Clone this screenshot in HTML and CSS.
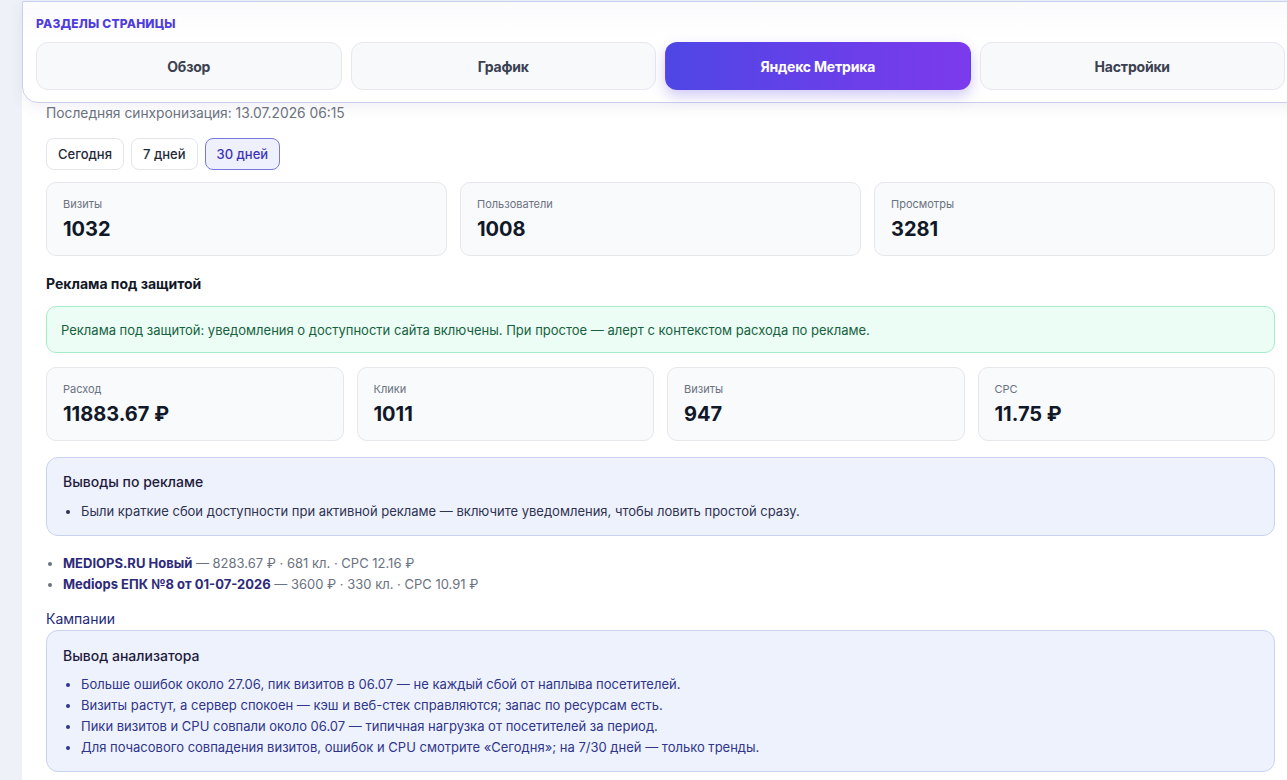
FILE: index.html
```html
<!DOCTYPE html>
<html lang="ru">
<head>
<meta charset="utf-8">
<title>Яндекс Метрика</title>
<link rel="stylesheet" href="styles.css">
</head>
<body>
<div class="main">
  <nav class="sections">
    <div class="sections-title">Разделы страницы</div>
    <div class="tabs">
      <button class="tab">Обзор</button>
      <button class="tab">График</button>
      <button class="tab active">Яндекс Метрика</button>
      <button class="tab">Настройки</button>
    </div>
  </nav>
  <div class="content">
    <div class="sync">Последняя синхронизация: 13.07.2026 06:15</div>
    <div class="ranges">
      <button class="range">Сегодня</button>
      <button class="range">7 дней</button>
      <button class="range active">30 дней</button>
    </div>
    <div class="cards cards-3">
      <div class="card"><div class="card-label">Визиты</div><div class="card-value">1032</div></div>
      <div class="card"><div class="card-label">Пользователи</div><div class="card-value">1008</div></div>
      <div class="card"><div class="card-label">Просмотры</div><div class="card-value">3281</div></div>
    </div>
    <h3 class="section-h">Реклама под защитой</h3>
    <div class="alert">Реклама под защитой: уведомления о доступности сайта включены. При простое — алерт с контекстом расхода по рекламе.</div>
    <div class="cards cards-4">
      <div class="card"><div class="card-label">Расход</div><div class="card-value">11883.67 ₽</div></div>
      <div class="card"><div class="card-label">Клики</div><div class="card-value">1011</div></div>
      <div class="card"><div class="card-label">Визиты</div><div class="card-value">947</div></div>
      <div class="card"><div class="card-label">CPC</div><div class="card-value">11.75 ₽</div></div>
    </div>
    <div class="note note-ads">
      <div class="note-title">Выводы по рекламе</div>
      <ul class="note-list">
        <li>Были краткие сбои доступности при активной рекламе — включите уведомления, чтобы ловить простой сразу.</li>
      </ul>
    </div>
    <ul class="campaigns">
      <li><b>MEDIOPS.RU Новый</b> — 8283.67 ₽ · 681 кл. · CPC 12.16 ₽</li>
      <li><b>Mediops ЕПК №8 от 01-07-2026</b> — 3600 ₽ · 330 кл. · CPC 10.91 ₽</li>
    </ul>
    <div class="camp-h">Кампании</div>
    <div class="note note-analyzer">
      <div class="note-title">Вывод анализатора</div>
      <ul class="note-list">
        <li>Больше ошибок около 27.06, пик визитов в 06.07 — не каждый сбой от наплыва посетителей.</li>
        <li>Визиты растут, а сервер спокоен — кэш и веб-стек справляются; запас по ресурсам есть.</li>
        <li>Пики визитов и CPU совпали около 06.07 — типичная нагрузка от посетителей за период.</li>
        <li>Для почасового совпадения визитов, ошибок и CPU смотрите «Сегодня»; на 7/30 дней — только тренды.</li>
      </ul>
    </div>
  </div>
</div>
</body>
</html>
```

FILE: styles.css
```css
* { box-sizing: border-box; }
html, body { margin: 0; padding: 0; }
body {
  background: #eef1f7;
  font-family: Inter, "Noto Sans", "Liberation Sans", sans-serif;
  color: #111827;
  overflow: hidden;
  height: 780px;
}
.main {
  margin-left: 22px;
  width: 1277px;
  min-height: 780px;
  background: #ffffff;
}
.sections {
  margin-top: 1px;
  height: 102px;
  padding: 14px 13px 0 13px;
  background: linear-gradient(#fbfbfd, #ffffff 40%);
  border: 1px solid #c9cfee;
  border-radius: 0 0 0 16px;
  box-shadow: 0 4px 14px rgba(60, 70, 120, 0.08);
}
.sections-title {
  font-size: 12px;
  font-weight: 800;
  letter-spacing: 0.2px;
  text-transform: uppercase;
  color: #4f3ce0;
  line-height: 16px;
}
.tabs {
  display: grid;
  width: 1249px;
  grid-template-columns: repeat(4, 1fr);
  gap: 9px;
  margin-top: 10px;
}
.tab {
  height: 48px;
  border: 1px solid #e6e8ee;
  border-radius: 12px;
  background: #f8f9fb;
  font-family: inherit;
  font-size: 14px;
  font-weight: 700;
  color: #3a4150;
  letter-spacing: -0.2px;
}
.tab.active {
  border-color: transparent;
  background: linear-gradient(90deg, #4f46e5, #7c3aed);
  color: #ffffff;
  box-shadow: 0 6px 14px rgba(99, 80, 230, 0.3);
}
.content {
  padding: 0 24px 0 24px;
}
.sync {
  margin-top: 1px;
  font-size: 13.8px;
  line-height: 18px;
  color: #6b7280;
}
.ranges {
  display: flex;
  gap: 7px;
  margin-top: 16px;
}
.range {
  height: 32px;
  padding: 0 11px;
  border: 1px solid #e2e5ea;
  border-radius: 8px;
  background: #ffffff;
  font-family: inherit;
  font-size: 13px;
  font-weight: 500;
  color: #1f2937;
}
.range.active {
  background: #eef0fd;
  border-color: #7a78df;
  color: #3b35b5;
}
.cards {
  display: grid;
  gap: 13px;
  margin-top: 12px;
}
.cards-3 { grid-template-columns: repeat(3, 1fr); }
.cards-4 { grid-template-columns: repeat(4, 1fr); margin-top: 14px; }
.card {
  height: 74px;
  padding: 14px 16px 0 16px;
  border: 1px solid #e5e7eb;
  border-radius: 10px;
  background: #f8fafc;
}
.card-label {
  font-size: 11px;
  line-height: 14px;
  color: #6b7280;
}
.card-value {
  margin-top: 5px;
  font-size: 20px;
  line-height: 26px;
  font-weight: 700;
  color: #111827;
}
.section-h {
  margin: 19px 0 0 0;
  font-size: 14px;
  line-height: 18px;
  font-weight: 700;
  color: #111827;
}
.alert {
  margin-top: 13px;
  height: 47px;
  padding: 0 14px;
  display: flex;
  align-items: center;
  border: 1px solid #a7ecc9;
  border-radius: 10px;
  background: #ebfdf4;
  font-size: 13px;
  color: #17613f;
}
.note {
  border: 1px solid #c9d3ee;
  border-radius: 12px;
  background: #eef2fd;
}
.note-ads {
  margin: 16px 0 0 0;
  height: 79px;
  padding: 15px 16px 0 16px;
}
.note-analyzer {
  margin: 2px 0 0 0;
  height: 142px;
  padding: 16px 16px 0 16px;
}
.note-title {
  font-size: 14px;
  line-height: 18px;
  font-weight: 500;
  color: #1e1b3a;
}
.note-list {
  margin: 10px 0 0 0;
  padding-left: 18px;
  font-size: 13px;
  line-height: 21px;
}
.note-ads .note-list { color: #2e3350; }
.note-analyzer .note-list { margin-top: 9px; color: #2f3588; }
.campaigns {
  margin: 17px 0 0 0;
  padding-left: 17px;
  font-size: 13px;
  line-height: 21px;
  color: #6b7280;
}
.campaigns b {
  color: #2e2a7a;
  font-weight: 700;
}
.camp-h {
  margin-top: 15px;
  font-size: 14px;
  line-height: 18px;
  color: #1e2a78;
}
```
